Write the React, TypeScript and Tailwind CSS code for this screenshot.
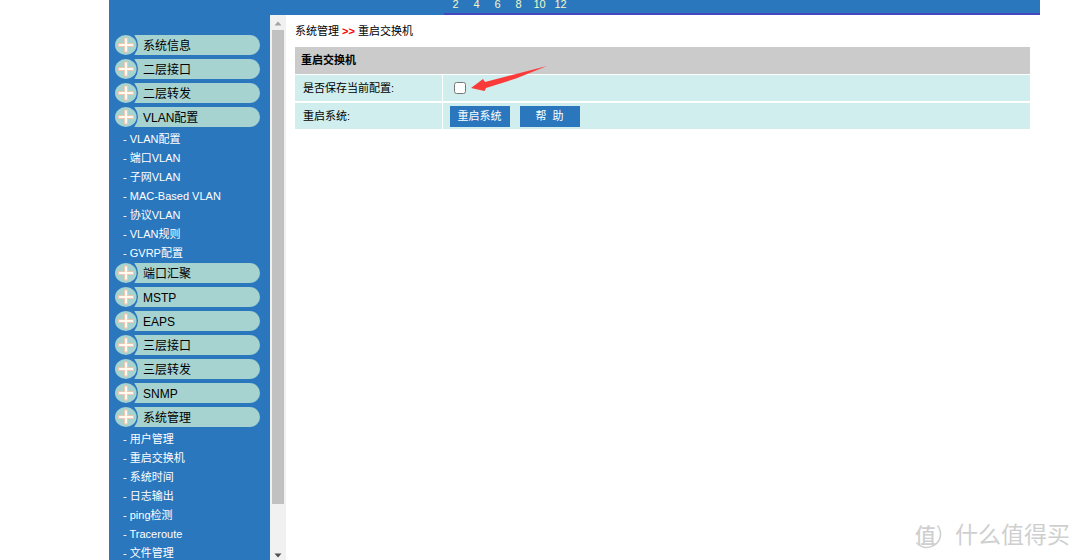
import React, { useState } from 'react';

const ports = [2, 4, 6, 8, 10, 12];

const menu = [
  { title: '系统信息', items: [] },
  { title: '二层接口', items: [] },
  { title: '二层转发', items: [] },
  {
    title: 'VLAN配置',
    items: ['VLAN配置', '端口VLAN', '子网VLAN', 'MAC-Based VLAN', '协议VLAN', 'VLAN规则', 'GVRP配置']
  },
  { title: '端口汇聚', items: [] },
  { title: 'MSTP', items: [] },
  { title: 'EAPS', items: [] },
  { title: '三层接口', items: [] },
  { title: '三层转发', items: [] },
  { title: 'SNMP', items: [] },
  {
    title: '系统管理',
    items: ['用户管理', '重启交换机', '系统时间', '日志输出', 'ping检测', 'Traceroute', '文件管理']
  }
];

function PlusCap() {
  return (
    <svg className="w-[25px] h-5 shrink-0" viewBox="0 0 25 20" aria-hidden="true">
      <ellipse cx="10.8" cy="10" rx="10.8" ry="10" fill="#a6d2d0" />
      <path d="M19.3 0H25V20H19.3Q26.7 10 19.3 0Z" fill="#a6d2d0" />
      <path d="M11 2.5V17.5M3 10H19" stroke="#efc5ae" strokeWidth="4" />
      <path d="M11 3.4V16.6M3.9 10H18.1" stroke="#fffaf2" strokeWidth="2.2" />
    </svg>
  );
}

function Sidebar() {
  return (
    <nav className="w-[161px] shrink-0 bg-[#2a77be] pt-5 pl-1.5 pr-2.5 overflow-hidden">
      {menu.map((group) => (
        <div key={group.title}>
          <button type="button" className="flex w-full h-5 mb-1 text-left text-black">
            <PlusCap />
            <span className="flex-1 h-5 pl-[3px] rounded-r-full bg-[#a6d2d0] text-xs leading-[22px]">
              {group.title}
            </span>
          </button>
          {group.items.length > 0 && (
            <ul className="-mt-px pl-2 text-[11px] leading-[19px] text-white">
              {group.items.map((item) => (
                <li key={item} className="whitespace-nowrap">
                  <a href="#">- {item}</a>
                </li>
              ))}
            </ul>
          )}
        </div>
      ))}
    </nav>
  );
}

function ScrollTrack() {
  return (
    <div className="w-4 shrink-0 flex flex-col items-center bg-[#f1f1f1]" aria-hidden="true">
      <svg className="w-4 h-[15px] shrink-0" viewBox="0 0 16 15">
        <path d="M4.5 10.5L8 6.5L11.5 10.5Z" fill="#a3a3a3" />
      </svg>
      <div className="w-full flex-1 px-0.5">
        <div className="h-[92%] bg-[#c1c1c1]"></div>
      </div>
      <svg className="w-4 h-[15px] shrink-0" viewBox="0 0 16 15">
        <path d="M4.5 8.5L8 12.5L11.5 8.5Z" fill="#505050" />
      </svg>
    </div>
  );
}

function Watermark() {
  return (
    <div className="absolute right-2.5 bottom-2.5 flex items-center gap-3 text-[#cfcfcf]">
      <div className="relative w-[30px] h-[30px] pl-0.5 flex items-center">
        <svg className="absolute inset-0 w-[30px] h-[30px]" viewBox="0 0 30 30" fill="none" stroke="#d0d0d0" aria-hidden="true">
          <path d="M24.5 5.5A13.4 13.4 0 0 1 3.5 22.5" strokeWidth="1.6" />
        </svg>
        <span className="text-[21px] leading-none font-medium">值</span>
      </div>
      <span className="text-[23px] leading-none">什么值得买</span>
    </div>
  );
}

export default function App() {
  const [save, setSave] = useState(false);

  return (
    <div className="relative h-screen overflow-hidden bg-white pl-[109px] pr-10 flex flex-col font-['Liberation_Sans','Noto_Sans_CJK_SC',sans-serif]">
      <header className="h-[15px] shrink-0 bg-[#2a77be] pl-[335px]">
        <div className="h-full flex pl-px border-b-2 border-[#4646c0] text-[11px] leading-[8px] text-[#f4f7c4]">
          {ports.map((port) => (
            <span key={port} className="w-[21px] text-center">
              {port}
            </span>
          ))}
        </div>
      </header>

      <div className="flex flex-1 min-h-0">
        <Sidebar />
        <ScrollTrack />

        <main className="flex-1 pt-2 pl-[9px] pr-2.5 text-[11px] text-black">
          <p className="leading-4 mb-2">
            系统管理 <b className="text-[#ff0000]">&gt;&gt;</b> 重启交换机
          </p>

          <table className="w-full border-collapse text-left">
            <thead>
              <tr className="h-[27px] bg-[#cbcbcb] border-b border-white">
                <th colSpan={2} className="pl-1.5 font-bold">重启交换机</th>
              </tr>
            </thead>
            <tbody className="bg-[#cfeeed]">
              <tr className="h-7 border-b-2 border-white">
                <td className="w-[147px] pl-2 border-r border-white">
                  <label htmlFor="save">是否保存当前配置:</label>
                </td>
                <td className="pl-[11px]">
                  <div className="relative flex items-center">
                    <input
                      id="save"
                      type="checkbox"
                      className="w-3 h-3"
                      checked={save}
                      onChange={(e) => setSave(e.target.checked)}
                    />
                    {/* Pointer to the save option */}
                    <svg className="absolute left-[17px] bottom-[3px] w-[76px] h-[25px]" viewBox="0 0 76 25" aria-hidden="true">
                      <path d="M0 22L12 13L14 16L45 8L76 0L45 12.5L15 22L13.5 25Z" fill="#fb3b3a" />
                    </svg>
                  </div>
                </td>
              </tr>
              <tr className="h-[27px]">
                <td className="pl-2 border-r border-white">重启系统:</td>
                <td className="pl-[7px]">
                  <div className="flex gap-2.5">
                    <button type="button" className="w-[60px] h-[21px] bg-[#2a77be] text-white">重启系统</button>
                    <button type="button" className="w-[60px] h-[21px] bg-[#2a77be] text-white whitespace-pre">帮  助</button>
                  </div>
                </td>
              </tr>
            </tbody>
          </table>
        </main>
      </div>

      <Watermark />
    </div>
  );
}
